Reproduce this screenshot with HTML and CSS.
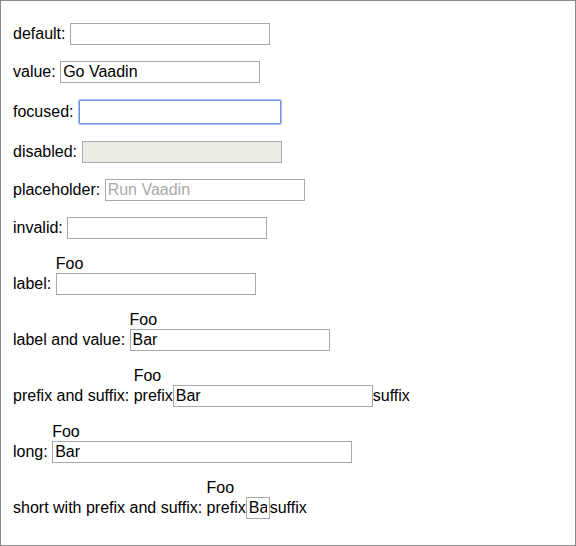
FILE: index.html
```
<!DOCTYPE html>
<html>
<head>
<meta charset="utf-8">
<link rel="stylesheet" href="styles.css">
</head>
<body>
<div class="page">
  <div class="row">default: <input class="field" type="text"></div>
  <div class="row">value: <input class="field" type="text" value="Go Vaadin"></div>
  <div class="row">focused: <input class="field focused" type="text"></div>
  <div class="row">disabled: <input class="field" type="text" disabled></div>
  <div class="row">placeholder: <input class="field" type="text" placeholder="Run Vaadin"></div>
  <div class="row">invalid: <input class="field" type="text"></div>
  <div class="row">label: <span class="group"><span class="caption">Foo</span><span class="line"><input class="field" type="text"></span></span></div>
  <div class="row">label and value: <span class="group"><span class="caption">Foo</span><span class="line"><input class="field" type="text" value="Bar"></span></span></div>
  <div class="row">prefix and suffix: <span class="group"><span class="caption">Foo</span><span class="line">prefix<input class="field" type="text" value="Bar">suffix</span></span></div>
  <div class="row">long: <span class="group"><span class="caption">Foo</span><span class="line"><input class="field long" type="text" value="Bar"></span></span></div>
  <div class="row">short with prefix and suffix: <span class="group"><span class="caption">Foo</span><span class="line">prefix<input class="field short" type="text" value="Bar">suffix</span></span></div>
</div>
</body>
</html>
```
FILE: styles.css
```
html, body {
  margin: 0;
  padding: 0;
  background: #fff;
}
.page {
  box-sizing: border-box;
  width: 576px;
  height: 546px;
  border: 1px solid #888;
  padding: 22px 12px 0 12px;
  font-family: "Liberation Sans", Arial, sans-serif;
  font-size: 16px;
  color: #000;
  display: flex;
  flex-direction: column;
  gap: 16px;
}
.row {
  line-height: normal;
  white-space: nowrap;
}
.group {
  display: inline-block;
  vertical-align: baseline;
}
.caption {
  display: block;
  height: 18px;
  line-height: 18px;
}
.line {
  display: block;
}
.field {
  box-sizing: border-box;
  width: 200px;
  height: 22px;
  margin: 0;
  padding: 1px 2px;
  border: 1px solid #a9a9a9;
  border-radius: 0;
  font-family: "Liberation Sans", Arial, sans-serif;
  font-size: 16px;
  line-height: 18px;
  color: #000;
  background: #fff;
  outline: none;
  vertical-align: baseline;
}
.field::placeholder {
  color: #a9a9a9;
}
.field:disabled {
  background: #ebebe4;
  border-color: #aaa;
}
.field.focused {
  width: 204px;
  height: 26px;
  padding: 2px 3px;
  border: 1px solid #a8c0ef;
  box-shadow: inset 0 0 0 1px #6d95e0;
  border-radius: 2px;
}
.field.long {
  width: 300px;
}
.field.short {
  width: 24px;
}
```
